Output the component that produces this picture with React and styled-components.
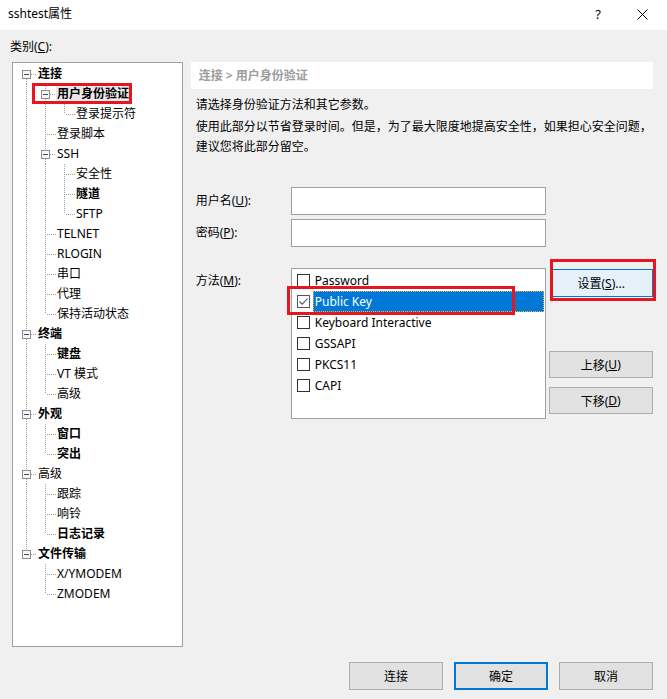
import React from 'react'
import styled, { createGlobalStyle } from 'styled-components'

const FONT = `"Segoe UI", "Noto Sans", "Noto Sans CJK SC", sans-serif`

const GlobalStyle = createGlobalStyle`
  html, body {
    margin: 0;
    padding: 0;
    background: #f0f0f0;
  }
  body {
    font-family: ${FONT};
    font-size: 12px;
    color: #000;
  }
`

const Window = styled.div`
  position: relative;
  width: 667px;
  height: 699px;
  background: #f0f0f0;
  display: flex;
  flex-direction: column;
  overflow: hidden;
`

const TitleBar = styled.div`
  height: 30px;
  flex-shrink: 0;
  background: #fff;
  display: flex;
  align-items: center;
  padding-left: 8px;
`

const Title = styled.div`
  flex: 1;
  line-height: 16px;
  margin-top: -2px;
`

const CaptionButtons = styled.div`
  display: flex;
  margin-right: 3px;
`

const CaptionButton = styled.div`
  width: 44px;
  height: 30px;
  display: flex;
  align-items: center;
  justify-content: center;
  font-size: 13px;
  margin-top: -2px;
`

const Content = styled.div`
  flex: 1;
  padding: 7px 14px 0 10px;
  display: flex;
  flex-direction: column;
`

const CategoryLabel = styled.div`
  height: 20px;
  line-height: 20px;
  margin-bottom: 5px;
`

const Main = styled.div`
  display: flex;
  align-items: flex-start;
`

const TreePanel = styled.div`
  margin-left: 2px;
  width: 171px;
  height: 585px;
  box-sizing: border-box;
  border: 1px solid #a0a0a0;
  background: #fff;
  padding: 1px 0 0 5px;
`

const TreeRow = styled.div`
  display: flex;
  align-items: center;
  height: 20px;
`

const GuideCell = styled.svg`
  display: block;
  width: 19px;
  height: 20px;
  flex-shrink: 0;
`

const TreeLabel = styled.span`
  padding: 0 2px 0 1px;
  line-height: 18px;
  white-space: nowrap;
  font-weight: ${p => (p.$bold ? 700 : 400)};
  background: ${p => (p.$selected ? '#e8e8e8' : 'transparent')};
`

const RightPane = styled.div`
  margin-left: 8px;
  width: 463px;
`

const Header = styled.div`
  height: 27px;
  line-height: 27px;
  background: #fff;
  padding-left: 8px;
  color: #9c9c9c;
  font-weight: 700;
`

const Para = styled.div`
  padding-left: 5px;
  line-height: 20px;
  white-space: nowrap;
  margin-top: ${p => p.$gap}px;
`

const Form = styled.div`
  margin-top: 30px;
  padding-left: 5px;
  display: grid;
  grid-template-columns: 95px 255px 107px;
  grid-template-rows: 28px 28px auto;
  row-gap: 4px;
`

const FieldLabel = styled.div`
  line-height: 20px;
  align-self: ${p => (p.$top ? 'start' : 'center')};
  margin-top: ${p => (p.$top ? 20 : 0)}px;
`

const TextBox = styled.div`
  box-sizing: border-box;
  height: 28px;
  border: 1px solid #a0a0a0;
  background: #fff;
`

const ListBox = styled.div`
  margin-top: 17px;
  box-sizing: border-box;
  height: 151px;
  border: 1px solid #a0a0a0;
  background: #fff;
  padding-top: 1px;
`

const ListItem = styled.div`
  display: flex;
  align-items: center;
  height: 21px;
  padding-left: 5px;
`

const CheckBox = styled.span`
  box-sizing: border-box;
  width: 13px;
  height: 13px;
  flex-shrink: 0;
  border: 1px solid ${p => (p.$checked ? '#555' : '#333')};
  background: #fff;
  display: flex;
  align-items: center;
  justify-content: center;
`

const ItemLabel = styled.span`
  flex: 1;
  margin: 0 1px 0 3px;
  padding-left: 2px;
  height: 21px;
  line-height: 21px;
  box-sizing: border-box;
  white-space: nowrap;
  color: ${p => (p.$selected ? '#fff' : '#000')};
  background: ${p => (p.$selected ? '#0078d7' : 'transparent')};
  outline: ${p => (p.$selected ? '1px dotted #f5b041' : 'none')};
  outline-offset: -1px;
`

const SideButtons = styled.div`
  margin-top: 17px;
  margin-left: 3px;
  display: flex;
  flex-direction: column;
  align-items: flex-end;
`

const Button = styled.div`
  box-sizing: border-box;
  display: flex;
  align-items: center;
  justify-content: center;
  width: ${p => p.$w || 94}px;
  height: ${p => p.$h || 28}px;
  margin-top: ${p => p.$mt || 0}px;
  background: ${p => (p.$hot ? '#e5f1fb' : '#e1e1e1')};
  border: ${p => (p.$default ? 2 : 1)}px solid
    ${p => (p.$hot || p.$default ? '#0078d7' : '#adadad')};
`

const Footer = styled.div`
  margin-top: 15px;
  display: flex;
  justify-content: flex-end;
  gap: 11px;
`

const Key = styled.u`
  text-underline-offset: 1px;
`

const RedBox = styled.div`
  position: absolute;
  box-sizing: border-box;
  left: ${p => p.$x}px;
  top: ${p => p.$y}px;
  width: ${p => p.$w}px;
  height: ${p => p.$h}px;
  border: 3px solid #e5161f;
  pointer-events: none;
`

const tree = [
  {
    label: '连接', bold: true, children: [
      { label: '用户身份验证', bold: true, selected: true, children: [{ label: '登录提示符' }] },
      { label: '登录脚本' },
      { label: 'SSH', children: [{ label: '安全性' }, { label: '隧道', bold: true }, { label: 'SFTP' }] },
      { label: 'TELNET' },
      { label: 'RLOGIN' },
      { label: '串口' },
      { label: '代理' },
      { label: '保持活动状态' },
    ],
  },
  { label: '终端', bold: true, children: [{ label: '键盘', bold: true }, { label: 'VT 模式' }, { label: '高级' }] },
  { label: '外观', bold: true, children: [{ label: '窗口', bold: true }, { label: '突出', bold: true }] },
  { label: '高级', children: [{ label: '跟踪' }, { label: '响铃' }, { label: '日志记录', bold: true }] },
  { label: '文件传输', bold: true, children: [{ label: 'X/YMODEM' }, { label: 'ZMODEM' }] },
]

function flatten(nodes, depth = 0, trail = [], out = []) {
  nodes.forEach((node, i) => {
    const last = i === nodes.length - 1
    out.push({ node, depth, trail, first: depth === 0 && i === 0, last })
    if (node.children) flatten(node.children, depth + 1, trail.concat(!last), out)
  })
  return out
}

const rows = flatten(tree)
const DOT = { stroke: '#a0a0a0', strokeWidth: 1, strokeDasharray: '1 1' }

function Guide({ through }) {
  return (
    <GuideCell viewBox="0 0 19 20">
      {through && <line x1="8.5" y1="0" x2="8.5" y2="20" {...DOT} />}
    </GuideCell>
  )
}

function Connector({ first, last, expander }) {
  return (
    <GuideCell viewBox="0 0 19 20">
      {!first && <line x1="8.5" y1="0" x2="8.5" y2={expander ? 6 : 10} {...DOT} />}
      {!last && <line x1="8.5" y1={expander ? 15 : 10} x2="8.5" y2="20" {...DOT} />}
      <line x1={expander ? 13 : 9} y1="10.5" x2="19" y2="10.5" {...DOT} strokeDashoffset={expander ? 0 : 1} />
      {expander && (
        <>
          <rect x="4.5" y="6.5" width="8" height="8" fill="#f6f6f6" stroke="#8e8e8e" />
          <line x1="6" y1="10.5" x2="11" y2="10.5" stroke="#2d4f8a" />
        </>
      )}
    </GuideCell>
  )
}

const methods = [
  { label: 'Password' },
  { label: 'Public Key', checked: true, selected: true },
  { label: 'Keyboard Interactive' },
  { label: 'GSSAPI' },
  { label: 'PKCS11' },
  { label: 'CAPI' },
]

export default function App() {
  return (
    <Window>
      <GlobalStyle />
      <TitleBar>
        <Title>sshtest属性</Title>
        <CaptionButtons>
          <CaptionButton>?</CaptionButton>
          <CaptionButton>
            <svg width="11" height="11" viewBox="0 0 11 11">
              <path d="M0.5 0.5 L10.5 10.5 M10.5 0.5 L0.5 10.5" stroke="#000" strokeWidth="1" />
            </svg>
          </CaptionButton>
        </CaptionButtons>
      </TitleBar>

      <Content>
        <CategoryLabel>类别(<Key>C</Key>):</CategoryLabel>
        <Main>
          <TreePanel>
            {rows.map((r, i) => (
              <TreeRow key={i}>
                {r.trail.map((through, k) => <Guide key={k} through={through} />)}
                <Connector first={r.first} last={r.last} expander={!!r.node.children} />
                <TreeLabel $bold={r.node.bold} $selected={r.node.selected}>{r.node.label}</TreeLabel>
              </TreeRow>
            ))}
          </TreePanel>

          <RightPane>
            <Header>连接 &gt; 用户身份验证</Header>
            <Para $gap={6}>请选择身份验证方法和其它参数。</Para>
            <Para $gap={2}>
              使用此部分以节省登录时间。但是，为了最大限度地提高安全性，如果担心安全问题，
              <br />
              建议您将此部分留空。
            </Para>

            <Form>
              <FieldLabel>用户名(<Key>U</Key>):</FieldLabel>
              <TextBox />
              <div />
              <FieldLabel>密码(<Key>P</Key>):</FieldLabel>
              <TextBox />
              <div />
              <FieldLabel $top>方法(<Key>M</Key>):</FieldLabel>
              <ListBox>
                {methods.map(m => (
                  <ListItem key={m.label}>
                    <CheckBox $checked={m.checked}>
                      {m.checked && (
                        <svg width="11" height="11" viewBox="0 0 11 11">
                          <path d="M1.5 5.5 L4.2 8.2 L9.5 2.5" fill="none" stroke="#555" strokeWidth="1.1" />
                        </svg>
                      )}
                    </CheckBox>
                    <ItemLabel $selected={m.selected}>{m.label}</ItemLabel>
                  </ListItem>
                ))}
              </ListBox>
              <SideButtons>
                <Button $hot $w={103} $mt={1}>设置(<Key>S</Key>)...</Button>
                <Button $w={104} $h={27} $mt={54}>上移(<Key>U</Key>)</Button>
                <Button $w={104} $h={27} $mt={9}>下移(<Key>D</Key>)</Button>
              </SideButtons>
            </Form>
          </RightPane>
        </Main>

        <Footer>
          <Button>连接</Button>
          <Button $default>确定</Button>
          <Button>取消</Button>
        </Footer>
      </Content>

      <RedBox $x={32} $y={83} $w={100} $h={21} />
      <RedBox $x={287} $y={286} $w={228} $h={29} />
      <RedBox $x={550} $y={259} $w={106} $h={42} />
    </Window>
  )
}
